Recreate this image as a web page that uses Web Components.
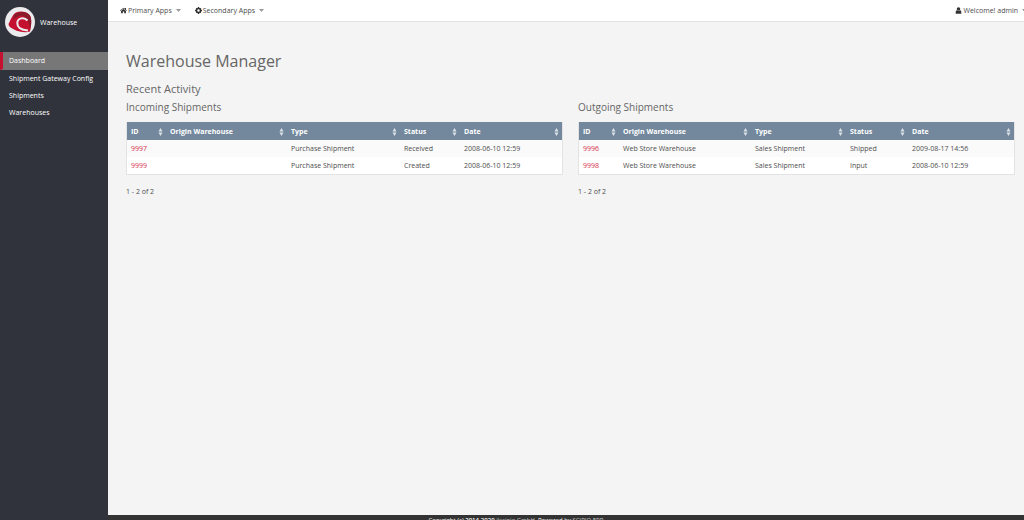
<!DOCTYPE html>
<html lang="en">
<head>
<meta charset="utf-8">
<title>Warehouse Manager</title>
<style>
html, body { height: 100%; margin: 0; }
body { font: 7px/17px "Open Sans", sans-serif; color: #4d4d4d; background: #f4f4f4; overflow: hidden; }
</style>
</head>
<body>
<app-shell>
  <side-bar slot="side" heading="Warehouse">
    <side-link href="#dashboard" active>Dashboard</side-link>
    <side-link href="#gateway">Shipment Gateway Config</side-link>
    <side-link href="#shipments">Shipments</side-link>
    <side-link href="#warehouses">Warehouses</side-link>
  </side-bar>
  <top-bar slot="top">
    <top-menu icon="home">Primary Apps</top-menu>
    <top-menu icon="cog">Secondary Apps</top-menu>
    <top-menu icon="user" slot="end">Welcome! admin</top-menu>
  </top-bar>
  <dashboard-page heading="Warehouse Manager" section="Recent Activity">
    <shipment-list id="incoming" heading="Incoming Shipments"></shipment-list>
    <shipment-list id="outgoing" heading="Outgoing Shipments"></shipment-list>
  </dashboard-page>
  <page-footer slot="foot"></page-footer>
</app-shell>
<script>
class Base extends HTMLElement {
  constructor() { super(); this.attachShadow({ mode: 'open' }); }
  connectedCallback() { this.shadowRoot.innerHTML = this.view(); }
  attr(n) { return this.getAttribute(n) || ''; }
}

customElements.define('app-shell', class extends Base {
  view() { return `
    <style>
      :host { display: grid; grid-template-columns: 108px minmax(0, 1fr); height: 100vh; }
      .main { display: flex; flex-direction: column; min-width: 0; }
      main { flex: 1; }
    </style>
    <slot name="side"></slot>
    <div class="main"><slot name="top"></slot><main><slot></slot></main><slot name="foot"></slot></div>`; }
});

customElements.define('side-bar', class extends Base {
  view() { return `
    <style>
      :host { display: block; background: #30333c; color: #fff; }
      header { display: flex; align-items: center; gap: 5px; height: 44px; padding: 0 5px 8px; font-weight: 500; }
      svg { width: 30px; height: 30px; }
    </style>
    <header>
      <svg viewBox="0 0 30 30" aria-hidden="true">
        <circle cx="15" cy="15" r="15" fill="#ebebed"/>
        <path d="M3.5 17 C6 12 8 7 11 5.500 C15 4 21 4 24.500 8 C27 11 26.500 18 25 24.500 C21 26 14 25 9 22.500 C6 21 3.500 19.500 3.500 17 Z" fill="#c4112f"/>
        <path d="M9 7.500 C14 4 21 4 24.500 8 C27 11 26.500 18 25 23 C25 17 23 11 18 9 C14 8 11 10 8 13 Z" fill="#8b1a2b"/>
        <path d="M22.500 13.500 C19 9.500 12.500 11 12.300 16 C12.200 20 16 23 23 23.500" fill="none" stroke="#ebebed" stroke-width="2"/>
        <path d="M22.500 15.500 C19 13 15.500 14 15.800 17 C16 19.500 19 21 22 20.500 C20 19 20 17 22.500 15.500 Z" fill="#c4112f"/>
      </svg>
      <span>${this.attr('heading')}</span>
    </header>
    <nav><slot></slot></nav>`; }
});

customElements.define('side-link', class extends Base {
  view() { return `
    <style>
      :host { display: block; }
      a { display: block; padding-left: 6px; border-left: 3px solid transparent; color: #fff; text-decoration: none; font-weight: 500; white-space: nowrap; }
      :host([active]) a { background: #777; border-left-color: #c4112f; border-bottom: 1px solid #777; }
    </style>
    <a href="${this.attr('href')}"><slot></slot></a>`; }
});

customElements.define('top-bar', class extends Base {
  view() { return `
    <style>
      :host { display: flex; justify-content: space-between; height: 21px; padding-left: 12px; background: #fff; border-bottom: 1px solid #e2e2e2; }
      div { display: flex; align-items: center; gap: 14px; }
      .end { margin-right: -3px; }
    </style>
    <div><slot></slot></div><div class="end"><slot name="end"></slot></div>`; }
});

const ICONS = {
  home: '<path d="M0 5 L5 1 L7 2.5 V1.5 H8.5 V4 L10 5 L9.5 5.7 L5 2.2 L.5 5.7 Z M1.5 5.6 L5 3 L8.5 5.6 V9 H6 V6.5 H4 V9 H1.5 Z"/>',
  cog: '<circle cx="5" cy="5" r="2.9" fill="none" stroke="#333" stroke-width="2.2"/><path d="M4 0 H6 V2 H4 Z M4 8 H6 V10 H4 Z M0 4 H2 V6 H0 Z M8 4 H10 V6 H8 Z M1.2 2.4 L2.4 1.2 L3.4 2.4 L2.4 3.4 Z M8.8 2.4 L7.6 1.2 L6.6 2.4 L7.6 3.4 Z M1.2 7.6 L2.4 8.8 L3.4 7.6 L2.4 6.6 Z M8.8 7.6 L7.6 8.8 L6.6 7.6 L7.6 6.6 Z"/>',
  user: '<circle cx="5" cy="2.8" r="2.5"/><path d="M1 9.5 V7.5 C1 5.5 2 4.8 3 4.8 C4 6 6 6 7 4.8 C8 4.8 9 5.5 9 7.5 V9.5 Z"/>'
};
customElements.define('top-menu', class extends Base {
  view() { return `
    <style>
      :host { display: block; }
      button { display: flex; align-items: center; border: 0; padding: 0; background: none; font: inherit; color: #4d4d4d; white-space: nowrap; }
      .icon { width: 7px; height: 7px; margin-right: 1px; fill: #333; }
      .caret { width: 5px; height: 3px; margin-left: 4px; fill: #999; }
    </style>
    <button type="button" aria-haspopup="true">
      <svg class="icon" viewBox="0 0 10 10" aria-hidden="true">${ICONS[this.attr('icon')]}</svg>
      <span><slot></slot></span>
      <svg class="caret" viewBox="0 0 5 3" aria-hidden="true"><path d="M0 0 H5 L2.5 3 Z"/></svg>
    </button>`; }
});

customElements.define('dashboard-page', class extends Base {
  view() { return `
    <style>
      :host { display: block; padding: 28px 9px 0 18px; color: #666; }
      h1, h2 { margin: 0; font-weight: 400; }
      h1 { font-size: 16px; line-height: 22px; }
      h2 { font-size: 11px; line-height: 19px; margin-top: 7px; }
      .cols { display: grid; grid-template-columns: 1fr 1fr; gap: 15px; }
    </style>
    <h1>${this.attr('heading')}</h1>
    <h2>${this.attr('section')}</h2>
    <div class="cols"><slot></slot></div>`; }
});

const DATA = {
  incoming: { widths: [39, 121, 113, 60], rows: [
    ['9997', '', 'Purchase Shipment', 'Received', '2008-06-10 12:59'],
    ['9999', '', 'Purchase Shipment', 'Created', '2008-06-10 12:59']] },
  outgoing: { widths: [40, 132, 95, 62], rows: [
    ['9996', 'Web Store Warehouse', 'Sales Shipment', 'Shipped', '2009-08-17 14:56'],
    ['9998', 'Web Store Warehouse', 'Sales Shipment', 'Input', '2008-06-10 12:59']] }
};
const HEADS = ['ID', 'Origin Warehouse', 'Type', 'Status', 'Date'];
const SORT = '<svg viewBox="0 0 4 8" aria-hidden="true"><path d="M0 3.5 L2 0 L4 3.5 Z M0 4.5 H4 L2 8 Z"/></svg>';
customElements.define('shipment-list', class extends Base {
  view() {
    const d = DATA[this.id];
    return `
    <style>
      :host { display: block; }
      h3 { margin: 0 0 5px; font-size: 10px; line-height: 19px; font-weight: 400; }
      table { width: 100%; table-layout: fixed; border-collapse: separate; border-spacing: 0; background: #fff; border: 1px solid #e3e3e3; border-top: 0; box-sizing: border-box; color: #4d4d4d; }
      th, td { padding: 0 0 0 4px; text-align: left; white-space: nowrap; }
      th { height: 18px; padding-right: 3px; background: #73889d; color: #fff; font-weight: 700; }
      th div { display: flex; justify-content: space-between; align-items: center; }
      th svg { width: 5px; height: 8px; margin-top: 2px; fill: #dde2e7; }
      td { height: 17px; }
      tbody tr:first-child td { background: #fafafa; }
      a { color: #d6304a; text-decoration: none; }
      p { margin: 8px 0 0; color: #4d4d4d; }
    </style>
    <h3 id="t">${this.attr('heading')}</h3>
    <table aria-labelledby="t">
      <colgroup>${d.widths.map(w => `<col style="width:${w}px">`).join('')}<col></colgroup>
      <thead><tr>${HEADS.map(h => `<th scope="col"><div><span>${h}</span>${SORT}</div></th>`).join('')}</tr></thead>
      <tbody>${d.rows.map(r => `<tr>${r.map((c, i) => `<td>${i ? c : `<a href="#${c}">${c}</a>`}</td>`).join('')}</tr>`).join('')}</tbody>
    </table>
    <p>1 - 2 of 2</p>`;
  }
});

customElements.define('page-footer', class extends Base {
  view() { return `
    <style>
      :host { display: block; height: 5px; overflow: hidden; background: #333; color: #fff; text-align: center; font-size: 6px; line-height: 11px; }
      p { margin: 0; padding-right: 100px; }
      b { font-weight: 600; }
      a { color: #ccc; text-decoration: none; }
    </style>
    <p>Copyright (c) <b>2014-2020</b> <a href="#company">ilscipio GmbH</a>. Powered by <a href="#product">SCIPIO ERP</a></p>`; }
});
</script>
</body>
</html>
